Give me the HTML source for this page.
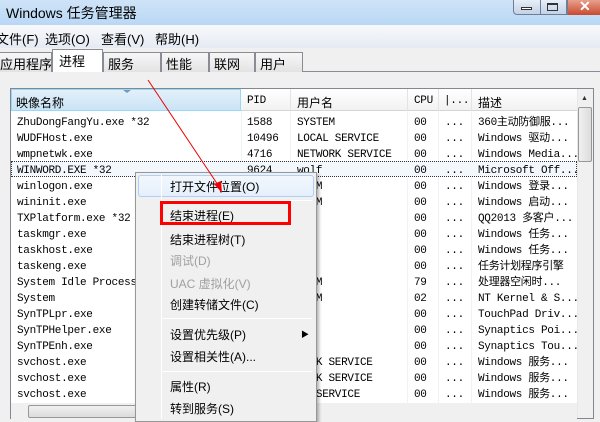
<!DOCTYPE html><html><head><meta charset="utf-8"><style>
*{margin:0;padding:0;box-sizing:border-box}
body{width:600px;height:419px;overflow:hidden;background:#f0f0f0;position:relative;font-family:"Liberation Sans","Noto Sans CJK SC",sans-serif;font-size:12px;color:#000}
.a{position:absolute;white-space:nowrap}
.mono{font-family:"Liberation Mono","Noto Sans CJK SC",monospace;font-size:11px;letter-spacing:-0.3px}
.tab{position:absolute;top:52px;height:20px;border:1px solid #898c95;border-bottom:none;background:linear-gradient(#f7f7f7,#e3e3e3);font-size:13px;padding:1px 0 0 4px;white-space:nowrap;overflow:hidden}
.row{position:absolute;left:11px;width:566px;height:16px}
.mi{position:absolute;left:170px;font-size:12px}
.g{color:#a0a0a0}
.sep{position:absolute;left:162px;width:150px;height:1px;background:#d7d7d7;border-bottom:1px solid #fff}
</style></head><body>
<div class="a" style="left:0;top:0;width:600px;height:25px;background:linear-gradient(#cfe3f7,#b9d8f5)"></div>
<div class="a" style="left:6px;top:3px;font-size:14px">Windows 任务管理器</div>
<div class="a" style="left:513px;top:0;width:54px;height:15px;border:1px solid #6d7e95;border-top:none;border-radius:0 0 0 4px;background:linear-gradient(#e6eef8,#c3d2e6)"></div>
<div class="a" style="left:521px;top:7px;width:11px;height:3px;border:1px solid #333;background:#fff"></div>
<div class="a" style="left:540px;top:0;width:1px;height:15px;background:#6d7e95"></div>
<div class="a" style="left:547px;top:3px;width:11px;height:8px;border:1px solid #333;border-top-width:2px"></div>
<div class="a" style="left:567px;top:0;width:33px;height:15px;background:linear-gradient(#e8a08e,#c84a2e);border-left:1px solid #6d7e95"></div>
<div class="a" style="left:579px;top:-2px;color:#fff;font-weight:bold;font-size:14px">✕</div>
<div class="a" style="left:0;top:25px;width:600px;height:23px;background:linear-gradient(#f8f9fb,#e5eaf3)"></div>
<div class="a" style="left:-4px;top:29px;font-size:13px">文件(F)</div>
<div class="a" style="left:45px;top:29px;font-size:13px">选项(O)</div>
<div class="a" style="left:101px;top:29px;font-size:13px">查看(V)</div>
<div class="a" style="left:155px;top:29px;font-size:13px">帮助(H)</div>
<div class="a" style="left:0;top:71px;width:600px;height:1px;background:#898c95"></div>
<div class="tab" style="left:-3px;width:55px;padding-left:2px">应用程序</div>
<div class="tab" style="left:52px;top:49px;height:23px;width:51px;background:#fff;padding-left:6px">进程</div>
<div class="tab" style="left:103px;width:58px">服务</div>
<div class="tab" style="left:161px;width:48px">性能</div>
<div class="tab" style="left:209px;width:46px">联网</div>
<div class="tab" style="left:255px;width:48px">用户</div>
<div class="a" style="left:10px;top:88px;width:584px;height:331px;background:#fff;border:1px solid #828790"></div>
<div class="a" style="left:11px;top:89px;width:566px;height:22px;background:linear-gradient(#fff,#f2f2f2);border-bottom:1px solid #d5d5d5"></div>
<div class="a" style="left:11px;top:89px;width:230px;height:22px;background:linear-gradient(#e3f0fa,#cae4f6);border:1px solid #96d9f9"></div>
<div class="a" style="left:123px;top:90px;width:0;height:0;border-left:4px solid transparent;border-right:4px solid transparent;border-top:3px solid #6a9cc4"></div>
<div class="a" style="left:16px;top:94px;font-size:12px">映像名称</div>
<div class="a mono" style="left:247px;top:95px">PID</div>
<div class="a" style="left:297px;top:94px">用户名</div>
<div class="a mono" style="left:414px;top:95px">CPU</div>
<div class="a mono" style="left:444px;top:95px">|...</div>
<div class="a" style="left:478px;top:94px">描述</div>
<div class="a" style="left:290px;top:89px;width:1px;height:22px;background:#e3e3e3"></div>
<div class="a" style="left:407px;top:89px;width:1px;height:22px;background:#e3e3e3"></div>
<div class="a" style="left:438px;top:89px;width:1px;height:22px;background:#e3e3e3"></div>
<div class="a" style="left:471px;top:89px;width:1px;height:22px;background:#e3e3e3"></div>
<div class="a" style="left:241px;top:111px;width:1px;height:292px;background:#eef3f8"></div>
<div class="a" style="left:290px;top:111px;width:1px;height:292px;background:#eef3f8"></div>
<div class="a" style="left:407px;top:111px;width:1px;height:292px;background:#eef3f8"></div>
<div class="a" style="left:438px;top:111px;width:1px;height:292px;background:#eef3f8"></div>
<div class="a" style="left:471px;top:111px;width:1px;height:292px;background:#eef3f8"></div>
<div class="row" style="top:161px;border:1px dotted #333;background:#f3f8fd"></div>
<div class="a mono" style="left:17px;top:115px;line-height:16px">ZhuDongFangYu.exe *32<br>WUDFHost.exe<br>wmpnetwk.exe<br>WINWORD.EXE *32<br>winlogon.exe<br>wininit.exe<br>TXPlatform.exe *32<br>taskmgr.exe<br>taskhost.exe<br>taskeng.exe<br>System Idle Process<br>System<br>SynTPLpr.exe<br>SynTPHelper.exe<br>SynTPEnh.exe<br>svchost.exe<br>svchost.exe<br>svchost.exe</div>
<div class="a mono" style="left:247px;top:115px;line-height:16px">1588<br>10496<br>4716<br>9624</div>
<div class="a mono" style="left:297px;top:115px;line-height:16px">SYSTEM<br>LOCAL SERVICE<br>NETWORK SERVICE<br>wolf<br>STEM<br>STEM<br>f<br>f<br>f<br>f<br>STEM<br>STEM<br>f<br>f<br>f<br>WORK SERVICE<br>WORK SERVICE<br>AL SERVICE</div>
<div class="a mono" style="left:414px;top:115px;line-height:16px">00<br>00<br>00<br>00<br>00<br>00<br>00<br>00<br>00<br>00<br>79<br>02<br>00<br>00<br>00<br>00<br>00<br>00</div>
<div class="a mono" style="left:445px;top:115px;line-height:16px">...<br>...<br>...<br>...<br>...<br>...<br>...<br>...<br>...<br>...<br>...<br>...<br>...<br>...<br>...<br>...<br>...<br>...</div>
<div class="a mono" style="left:478px;top:115px;line-height:16px">360主动防御服...<br>Windows 驱动...<br>Windows Media...<br>Microsoft Off...<br>Windows 登录...<br>Windows 启动...<br>QQ2013 多客户...<br>Windows 任务...<br>Windows 任务...<br>任务计划程序引擎<br>处理器空闲时...<br>NT Kernel &amp; S...<br>TouchPad Driv...<br>Synaptics Poi...<br>Synaptics Tou...<br>Windows 服务...<br>Windows 服务...<br>Windows 服务...</div>
<div class="a" style="left:577px;top:89px;width:16px;height:329px;background:#f0f0f0;border-left:1px solid #e8e8e8"></div>
<div class="a" style="left:581px;top:95px;font-size:7px;color:#333">▲</div>
<div class="a" style="left:578px;top:107px;width:14px;height:55px;border:1px solid #979797;border-radius:2px;background:linear-gradient(90deg,#f0f0f0,#dcdcdc)"></div>
<div class="a" style="left:11px;top:403px;width:566px;height:16px;background:#f0f0f0"></div>
<div class="a" style="left:28px;top:405px;width:110px;height:13px;border:1px solid #979797;border-radius:2px;background:linear-gradient(#f0f0f0,#dcdcdc)"></div>
<div class="a" style="left:135px;top:172px;width:182px;height:250px;background:#f0f0f0;border:1px solid #979797;box-shadow:2px 2px 3px rgba(0,0,0,.3)"></div>
<div class="a" style="left:138px;top:175px;width:176px;height:22px;border:1px solid #aecff7;border-radius:3px;background:linear-gradient(#f2f7fd,#e5effb)"></div>
<div class="a" style="left:161px;top:174px;width:1px;height:245px;background:#e2e3e3;border-right:1px solid #fff"></div>
<div class="mi" style="top:178px">打开文件位置(O)</div>
<div class="sep" style="top:200px"></div>
<div class="mi" style="top:207px">结束进程(E)</div>
<div class="mi" style="top:231px">结束进程树(T)</div>
<div class="mi g" style="top:252px">调试(D)</div>
<div class="mi g" style="top:275px">UAC 虚拟化(V)</div>
<div class="mi" style="top:296px">创建转储文件(C)</div>
<div class="sep" style="top:318px"></div>
<div class="mi" style="top:326px">设置优先级(P)</div>
<div class="a" style="left:301px;top:329px;font-size:8px">▶</div>
<div class="mi" style="top:348px">设置相关性(A)...</div>
<div class="sep" style="top:371px"></div>
<div class="mi" style="top:378px">属性(R)</div>
<div class="mi" style="top:400px">转到服务(S)</div>
<div class="a" style="left:160px;top:201px;width:131px;height:24px;border:3px solid #f00"></div>
<svg class="a" style="left:0;top:0" width="600" height="419"><line x1="148" y1="80" x2="220" y2="188" stroke="#e00" stroke-width="1"/><polygon points="222,193 214,184 221,181" fill="#e00"/></svg>
</body></html>
